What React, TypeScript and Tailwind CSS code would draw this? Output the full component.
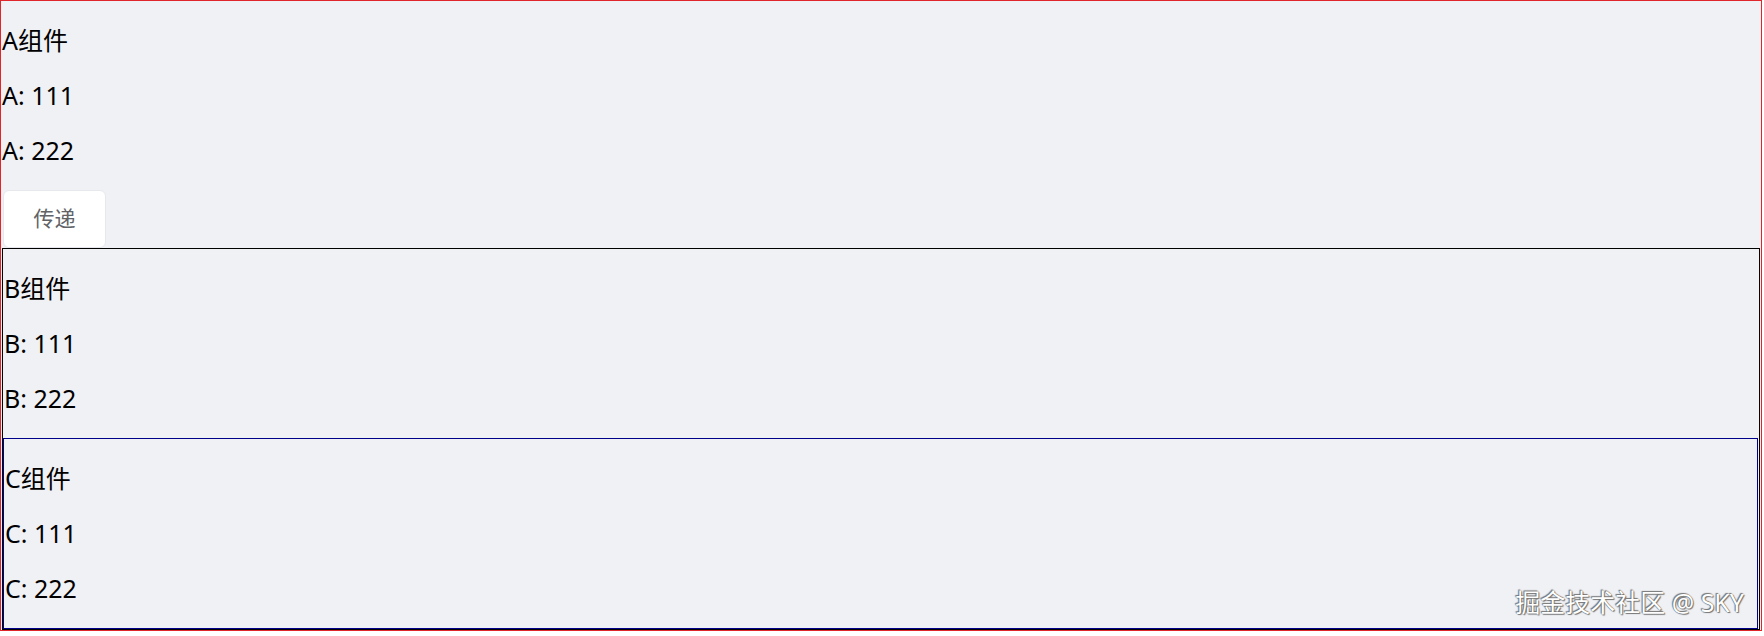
import React from "react";

const font = { fontFamily: '"Segoe UI", "Noto Sans", "Noto Sans CJK SC", sans-serif' };

function Line({ children }: { children: React.ReactNode }) {
  return <p className="my-[24px] pl-[1px] text-[25px] leading-[31px] text-black">{children}</p>;
}

export default function App() {
  return (
    <div className="relative w-[1764px] h-[636px] bg-white" style={font}>
      <div className="w-[1762px] border border-[#e0262b] bg-[#f0f1f5]">
        <div className="flow-root">
          <Line>A组件</Line>
          <Line>A: 111</Line>
          <Line>A: 222</Line>
        </div>
        <button className="ml-[2px] flex h-[58px] w-[103px] items-center justify-center rounded-[6px] border border-[#e6e8ed] bg-white text-[21px] text-[#606266]">
          传递
        </button>
        <div className="ml-[1px] mr-[1px] flow-root border border-black">
          <Line>B组件</Line>
          <Line>B: 111</Line>
          <Line>B: 222</Line>
          <div className="mr-[1px] flow-root border border-[#00008b]">
            <Line>C组件</Line>
            <Line>C: 111</Line>
            <Line>C: 222</Line>
          </div>
        </div>
      </div>
      <div
        className="absolute right-[20px] top-[587px] text-[25px] leading-[30px] text-white"
        style={{ textShadow: "0 0 1px #555, 1px 1px 1px #777, -1px -1px 1px #777" }}
      >
        掘金技术社区 @ SKY
      </div>
    </div>
  );
}
